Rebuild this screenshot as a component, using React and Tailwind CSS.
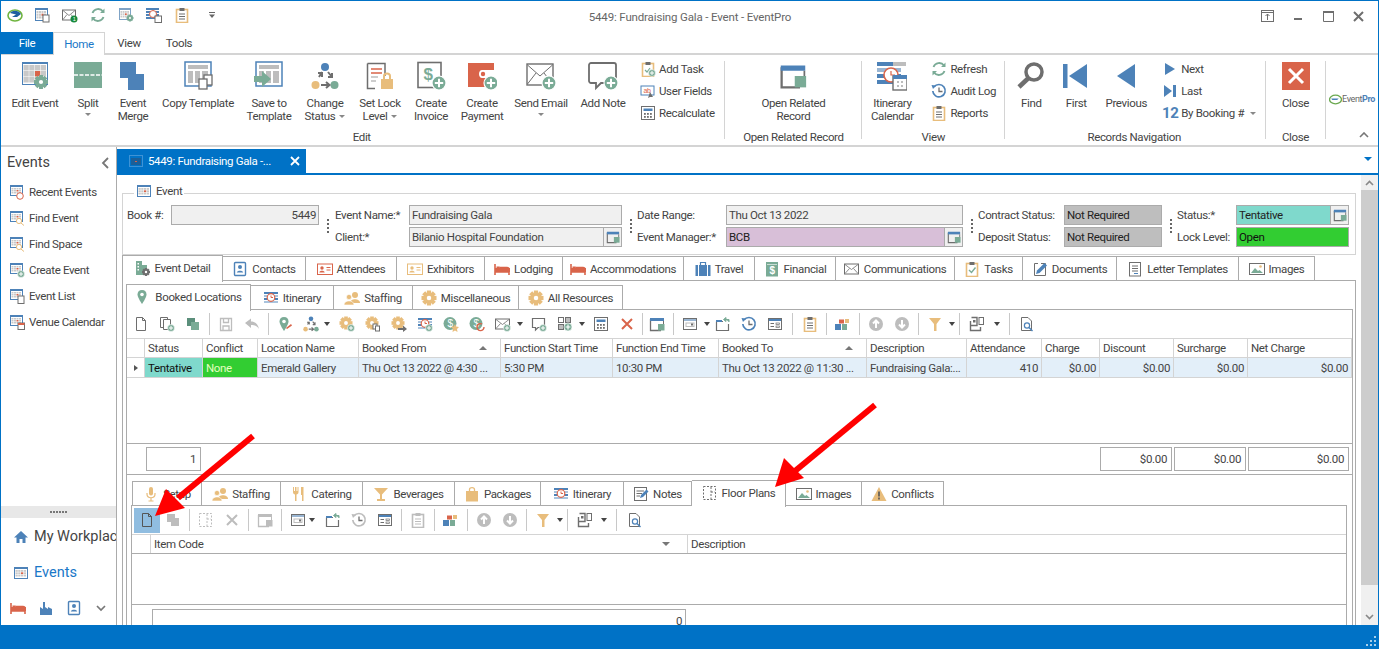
const B = "#4d82b8";
const G = "#7aab96";
const R = "#d9644a";
const T = "#e8bd7c";
const K = "#6e6e6e";
const L = "#bdbdbd";

function Svg({ s = 16, v = 16, children }) {
  return (
    <svg width={s} height={s} viewBox={`0 0 ${v} ${v}`} className="shrink-0">
      {children}
    </svg>
  );
}

function Plus({ x, y, r = 3.5, c = G }) {
  return (
    <g>
      <circle cx={x} cy={y} r={r} fill={c} stroke="#fff" strokeWidth={r / 6} />
      <path d={`M${x - r * 0.6} ${y}H${x + r * 0.6}M${x} ${y - r * 0.6}V${y + r * 0.6}`} stroke="#fff" strokeWidth={r / 3.5} />
    </g>
  );
}

function Gear({ x, y, r, c = T }) {
  return (
    <g>
      {[0, 45, 90, 135].map((a) => (
        <rect key={a} x={x - r * 0.28} y={y - r} width={r * 0.56} height={r * 2} fill={c} transform={`rotate(${a} ${x} ${y})`} />
      ))}
      <circle cx={x} cy={y} r={r * 0.72} fill={c} />
      <circle cx={x} cy={y} r={r * 0.3} fill="#fff" />
    </g>
  );
}

function Cal({ x = 1, y = 2, w = 13, h = 12, c = B }) {
  const cells = [];
  for (let i = 0; i < 3; i++) for (let j = 0; j < 4; j++) cells.push([i, j]);
  const cw = (w - 3) / 4;
  const ch = (h - 5) / 3;
  return (
    <g>
      <rect x={x + 0.5} y={y + 0.5} width={w - 1} height={h - 1} fill="#fff" stroke={c} />
      <rect x={x} y={y} width={w} height={2} fill={c} />
      {cells.map(([i, j]) => (
        <rect key={`${i}${j}`} x={x + 1.5 + j * cw} y={y + 3 + i * ch} width={cw - 0.5} height={ch - 0.5} fill={i === 1 && j === 2 ? R : "#c9c9c9"} />
      ))}
    </g>
  );
}

const DocI = ({ c = K }) => (
  <Svg><path d="M3.5 1.5H9.5L12.5 4.5V14.5H3.5Z M9.5 1.5V4.5H12.5" fill="none" stroke={c} /></Svg>
);
const CopyDocI = () => (
  <Svg><path d="M1.5 1.5H8.5V11.5H1.5Z" fill="#fff" stroke={K} /><path d="M4.5 3.5H11.5V13.5H4.5Z" fill="#fff" stroke={K} /><Plus x={12} y={12} r={3.5} /></Svg>
);
const SquaresI = ({ c = G, d = "#5b8f7b" }) => (
  <Svg><rect x="2" y="2" width="8" height="8" fill={d} /><rect x="6" y="6" width="8" height="8" fill={c} /></Svg>
);
const SaveI = () => (
  <Svg><path d="M2.5 2.5H13.5V14.5H2.5Z M5.5 2.5V6.5H10.5V2.5 M5 14V10H11V14" fill="none" stroke={L} strokeWidth="1.3" /></Svg>
);
const UndoI = () => (
  <Svg><path d="M1 7L7 2.5V5.5C11 5.5 14 8 15 13C13 10 11 9 7 9V12Z" fill={L} /></Svg>
);
const PinI = ({ pencil = true, c = G }) => (
  <Svg>
    <path d="M7 1C4 1 2.5 3 2.5 5.5C2.5 8.5 7 15 7 15C7 15 11.5 8.5 11.5 5.5C11.5 3 10 1 7 1Z" fill={c} />
    <circle cx="7" cy="5.5" r="1.8" fill="#fff" />
    {pencil && <path d="M9 12L14 8L15 9.5L10 13Z" fill={R} />}
  </Svg>
);
const FlowI = ({ s = 16 }) => (
  <Svg s={s} v={28}>
    <circle cx="14" cy="5" r="4" fill={B} />
    <circle cx="4.5" cy="23" r="4" fill={T} />
    <circle cx="23.5" cy="23" r="4" fill={G} />
    <path d="M10 23H18M15 20L18.5 23L15 26M8 15L11 10M7 11H11V15M17 10L21 15M21 11V15H17" fill="none" stroke={K} strokeWidth="2" />
  </Svg>
);
const GearPlusI = () => (<Svg><Gear x={7} y={7} r={6.5} /><Plus x={12} y={12} /></Svg>);
const GearCopyI = () => (<Svg><Gear x={7} y={7} r={6.5} /><rect x="8" y="8" width="4" height="5" fill="#fff" stroke={K} /><rect x="10.5" y="10" width="4" height="5" fill="#fff" stroke={K} /></Svg>);
const GearArrowI = () => (<Svg><Gear x={7} y={7} r={6.5} /><path d="M7 12H12V9.5L16 13L12 16V14H7Z" fill={K} /></Svg>);
const ItinI = ({ plus = false, s = 16 }) => (
  <Svg s={s}>
    {[2, 5, 8, 11].map((y) => (<rect key={y} x="1" y={y} width="14" height="2" fill={y % 2 ? "#a9c3dd" : B} />))}
    <circle cx="8" cy="7.5" r="3.8" fill="#fff" stroke={R} strokeWidth="1.2" />
    <path d="M8 5.5V7.5H10" stroke={R} fill="none" />
    {plus && <Plus x={12} y={12} />}
  </Svg>
);
const DollarI = ({ refresh = false }) => (
  <Svg>
    <circle cx="7" cy="7.5" r="6.5" fill={G} />
    <text x="7" y="11" textAnchor="middle" fontSize="10" fill="#fff" fontFamily="Liberation Sans">$</text>
    {refresh ? <path d="M15 11A3.5 3.5 0 1 1 13 8" fill="none" stroke={R} strokeWidth="1.4" /> : <path d="M12 8L13.2 10.5L16 11L14 13L14.5 16L12 14.5L9.5 16L10 13L8 11L10.8 10.5Z" fill={T} />}
  </Svg>
);
const MailI = ({ plus = true, s = 16 }) => (
  <Svg s={s}>
    <rect x="0.5" y="3" width="14" height="10" fill="#fff" stroke={K} />
    <path d="M1 3.5L7.5 8.5L14 3.5M1 12.5L5.5 7.5M14 12.5L9.5 7.5" fill="none" stroke={K} strokeWidth="0.8" />
    {plus && <Plus x={12} y={12} />}
  </Svg>
);
const NoteI = () => (
  <Svg><path d="M1.5 2.5H13.5V11.5H7L4.5 14V11.5H1.5Z" fill="#fff" stroke={K} strokeWidth="1.2" /><Plus x={12} y={12} /></Svg>
);
const GridPlusI = () => (
  <Svg><rect x="1.5" y="1.5" width="5" height="5" fill="none" stroke={K} /><rect x="8.5" y="1.5" width="5" height="5" fill={L} stroke={K} /><rect x="1.5" y="8.5" width="5" height="5" fill={L} stroke={K} /><Plus x={11} y={11} r={4} /></Svg>
);
const CalcI = ({ s = 16 }) => (
  <Svg s={s}>
    <rect x="1.5" y="1.5" width="13" height="13" fill="#fff" stroke={K} />
    <rect x="3.5" y="3.5" width="9" height="2.5" fill={B} />
    {[4, 7, 10].map((x) => [8, 11].map((y) => (<rect key={`${x}${y}`} x={x} y={y} width="1.8" height="1.8" fill={K} />)))}
  </Svg>
);
const XI = ({ c = R }) => (
  <Svg><path d="M3 3L13 13M13 3L3 13" stroke={c} strokeWidth="2" /></Svg>
);
const WinI = ({ s = 16, gray = false }) => (
  <Svg s={s}>
    <path d="M1.5 3V14.5H12" fill="none" stroke={gray ? L : K} strokeWidth="1.3" />
    <path d="M1 2H15V5H1Z" fill={gray ? L : B} />
    <path d="M14.5 5V8" stroke={gray ? L : K} />
    <rect x="9" y="8" width="6.5" height="6.5" fill={gray ? L : G} />
  </Svg>
);
const Win2I = () => (
  <Svg><rect x="1.5" y="2.5" width="13" height="11" fill="#fff" stroke={K} /><rect x="2" y="3" width="12" height="2" fill="#9ab6d3" /><rect x="4" y="7" width="8" height="3.5" fill="none" stroke={L} /><rect x="9" y="7.5" width="2" height="2" fill={K} /></Svg>
);
const UploadI = () => (
  <Svg><path d="M1.5 5.5H8M13.5 8V14.5H1.5V5.5" fill="none" stroke={K} strokeWidth="1.2" /><path d="M1 4H7V6H1Z" fill={B} /><path d="M14 6V3.5H11M11 1.5L8.5 3.5L11 5.5Z" fill={G} stroke={G} /></Svg>
);
const HistoryI = ({ c = B }) => (
  <Svg><path d="M3 4A6.2 6.2 0 1 1 1.8 8" fill="none" stroke={c} strokeWidth="1.7" /><path d="M0.5 2L5 2.5L2 6Z" fill={c} /><path d="M8 4.5V8.5H11.5" fill="none" stroke={K} strokeWidth="1.3" /></Svg>
);
const FormI = () => (
  <Svg><rect x="1.5" y="2.5" width="13" height="11" fill="#fff" stroke={K} /><rect x="2" y="3" width="12" height="2" fill={B} /><path d="M3.5 7.5H7M3.5 10.5H7" stroke={K} /><rect x="9" y="7" width="3.5" height="1.5" fill="none" stroke={K} strokeWidth="0.7" /><rect x="9" y="10" width="3.5" height="1.5" fill="none" stroke={K} strokeWidth="0.7" /></Svg>
);
const ClipI = ({ c = T, line = K, s = 16 }) => (
  <Svg s={s}>
    <rect x="2.5" y="2.5" width="11" height="13" fill="#fff" stroke={c} strokeWidth="1.6" />
    <rect x="5.5" y="1" width="5" height="3" fill={line} />
    <path d="M5 7H11M5 9.5H11M5 12H11" stroke={line} />
  </Svg>
);
const BlocksI = () => (
  <Svg><rect x="1" y="8" width="6" height="6" fill={B} /><rect x="8" y="8" width="5" height="6" fill={G} /><rect x="5" y="3.5" width="5" height="4" fill={R} /><rect x="11" y="3" width="4" height="4" fill={T} /></Svg>
);
const UpI = () => (
  <Svg><circle cx="8" cy="8" r="7" fill={L} /><path d="M8 12V5M5 7.5L8 4.5L11 7.5" fill="none" stroke="#fff" strokeWidth="2" /></Svg>
);
const DownI = () => (
  <Svg><circle cx="8" cy="8" r="7" fill={L} /><path d="M8 4V11M5 8.5L8 11.5L11 8.5" fill="none" stroke="#fff" strokeWidth="2" /></Svg>
);
const FilterI = () => (
  <Svg><path d="M2 2H14L9.5 8V15H7V8Z" fill={T} /></Svg>
);
const LayoutI = () => (
  <Svg><path d="M1.5 5V14.5H11.5V11M1.5 9.5H8V1.5H2.5" fill="none" stroke={K} strokeWidth="1.4" /><rect x="4" y="4" width="2.5" height="2.5" fill={K} /><rect x="10" y="1.5" width="4.5" height="7" fill="#fff" stroke={K} /></Svg>
);
const PreviewI = () => (
  <Svg><path d="M2.5 1.5H9L12.5 5V14.5H2.5Z" fill="#fff" stroke={K} /><circle cx="8" cy="9.5" r="2.6" fill="#fff" stroke={B} strokeWidth="1.2" /><path d="M10 11.5L13.5 15" stroke={B} strokeWidth="1.4" /></Svg>
);
const FloorI = ({ c = K }) => (
  <Svg><rect x="1.5" y="1.5" width="12" height="13" fill="none" stroke={c} strokeDasharray="2 1.5" /><path d="M9 2V14M9 7H13" stroke={c} strokeDasharray="2 1.5" /></Svg>
);
const BedI = () => (
  <Svg><path d="M1 3V14M1 11H15V14M15 11V8.5C15 7 14 6.5 13 6.5H6V10H2" fill="none" stroke={R} strokeWidth="1.6" /><rect x="1" y="7" width="15" height="4" fill={R} /><rect x="2.5" y="5.5" width="3" height="2" fill={R} /></Svg>
);
const BookI = () => (
  <Svg><rect x="2.5" y="1.5" width="11" height="13" rx="1" fill="#fff" stroke={B} strokeWidth="1.4" /><circle cx="8" cy="6" r="2" fill={B} /><path d="M4.8 11.5C5 9 11 9 11.2 11.5Z" fill={B} /></Svg>
);
const CardI = ({ c = R }) => (
  <Svg><rect x="0.5" y="3" width="15" height="10.5" fill="#fff" stroke={c} /><circle cx="5" cy="7" r="1.7" fill={c} /><path d="M2.3 11.5C2.5 9 7.5 9 7.7 11.5Z" fill={c} /><path d="M9.5 6.5H13.5M9.5 9H13.5" stroke={c} /></Svg>
);
const SuitcaseI = () => (
  <Svg><path d="M5.5 4V1.5H10.5V4" fill="none" stroke={B} strokeWidth="1.2" /><rect x="0.5" y="4" width="2.5" height="11" fill={B} /><rect x="4" y="4" width="8" height="11" fill={B} /><rect x="13" y="4" width="2.5" height="11" fill={B} /></Svg>
);
const FinI = () => (
  <Svg><rect x="2" y="1" width="12" height="14.5" fill={G} /><path d="M3 3.5H13" stroke="#fff" strokeWidth="0.6" /><text x="8" y="13" textAnchor="middle" fontSize="10" fontWeight="700" fill="#fff" fontFamily="Liberation Sans">$</text></Svg>
);
const TaskI = () => (
  <Svg><rect x="2.5" y="2.5" width="11" height="13" fill="#fff" stroke={T} strokeWidth="1.6" /><rect x="5.5" y="1" width="5" height="3" fill={K} /><path d="M5 9L7.5 11.5L11.5 6.5" fill="none" stroke={G} strokeWidth="1.4" /></Svg>
);
const PencilDocI = () => (
  <Svg><path d="M9 2.5H13.5V14.5H2.5V2.5H6" fill="none" stroke={K} /><path d="M4 13L5 9.5L12.5 2L15 4.5L7.5 12Z" fill={B} /></Svg>
);
const LinesI = () => (
  <Svg><rect x="2.5" y="1.5" width="11" height="13.5" fill="#fff" stroke={K} /><path d="M5 5H11M5 7.5H11M5 10H11" stroke={K} /><path d="M7 12.5H11" stroke={B} /></Svg>
);
const PicI = () => (
  <Svg><rect x="0.5" y="2.5" width="15" height="11" fill="#fff" stroke={K} /><path d="M2 12L6 7L9 10L10.5 9L14 12Z" fill={G} /><circle cx="11.5" cy="5.5" r="1.3" fill={T} /></Svg>
);
const PeopleI = () => (
  <Svg><circle cx="11" cy="5" r="3" fill={T} /><path d="M6 13C6 8 16 8 16 13Z" fill={T} /><circle cx="5" cy="7" r="2.6" fill={T} stroke="#fff" strokeWidth="0.6" /><path d="M0 15C0 9.5 10 9.5 10 15Z" fill={T} stroke="#fff" strokeWidth="0.6" /></Svg>
);
const BuildI = () => (
  <Svg><rect x="2" y="1" width="6" height="14" fill={G} /><rect x="8" y="5" width="5" height="10" fill={G} /><rect x="3.5" y="3" width="1.5" height="1.5" fill="#fff" /><rect x="3.5" y="6" width="1.5" height="1.5" fill="#fff" /><rect x="3.5" y="9" width="1.5" height="1.5" fill="#fff" /><Gear x={12} y={12} r={4} c={K} /></Svg>
);
const MicI = () => (
  <Svg><rect x="6" y="1" width="4" height="8.5" rx="2" fill={T} /><path d="M4 7V8C4 13 12 13 12 8V7M8 12V15M5.5 15H10.5" fill="none" stroke={T} strokeWidth="1.2" /></Svg>
);
const ForkI = () => (
  <Svg><path d="M2 1V6C2 8 3 8 4 8.5V15H5.5V8.5C6.5 8 7.5 8 7.5 6V1H6.5V5H5.5V1H4V5H3V1Z M10 1H12.5V15H11V9H10Z" fill={T} /></Svg>
);
const GlassI = () => (
  <Svg><path d="M1 2H15L9 8.5V13H12V15H4V13H7V8.5Z" fill={T} /></Svg>
);
const BagI = () => (
  <Svg><rect x="2" y="5" width="12" height="10.5" fill={T} /><path d="M5.5 7V3.5C5.5 1 10.5 1 10.5 3.5V7" fill="none" stroke={T} strokeWidth="1.3" /></Svg>
);
const NotesI = () => (
  <Svg><rect x="1.5" y="1.5" width="12" height="13" fill="#fff" stroke={K} /><path d="M3.5 5H11M3.5 7.5H9M3.5 10H7" stroke={K} /><path d="M7 12L8 9L13.5 3.5L15.5 5.5L10 11Z" fill={B} /></Svg>
);
const WarnI = () => (
  <Svg><path d="M8 1L15.5 15H0.5Z" fill={T} /><path d="M8 5.5V10.5M8 11.5V13.5" stroke="#555" strokeWidth="1.6" /></Svg>
);

// ribbon, big icons
const BigEdit = () => (<Svg s={30} v={30}><Cal x={2} y={1} w={26} h={23} /><Gear x={21} y={21} r={7} c={G} /></Svg>);
const BigSplit = () => (
  <Svg s={28} v={28}><rect width="28" height="26" fill={G} /><path d="M0 13H28" stroke="#fff" strokeWidth="1.5" strokeDasharray="4 1.5" /></Svg>
);
const BigMerge = () => (
  <Svg s={28} v={28}><rect x="1" y="0" width="16" height="16" fill={B} /><rect x="9" y="12" width="16" height="16" fill={B} /></Svg>
);
const TplFrame = () => (
  <g>
    <rect x="2" y="1" width="26" height="24" fill="#fff" stroke={B} strokeWidth="1.5" />
    <rect x="5" y="4" width="20" height="4" fill={L} />
    <rect x="5" y="10" width="5" height="12" fill={L} />
    <rect x="12" y="10" width="5" height="12" fill={L} />
    <rect x="19" y="10" width="6" height="12" fill={L} />
  </g>
);
const BigCopyTpl = () => (
  <Svg s={30} v={30}><TplFrame /><rect x="21" y="14" width="8" height="10" fill="#fff" stroke={K} strokeWidth="1.3" /><rect x="16" y="18" width="8" height="10" fill="#fff" stroke={K} strokeWidth="1.3" /></Svg>
);
const BigSaveTpl = () => (
  <Svg s={30} v={30}><TplFrame /><path d="M0 15H8V10L17 18L8 26V21H0Z" fill={G} /></Svg>
);
const BigLock = () => (
  <Svg s={28} v={28}>
    <path d="M1.5 1.5H19V14M9 26.5H1.5V1.5" fill="#fff" stroke={K} strokeWidth="1.5" />
    <path d="M5 7H16M5 11H16" stroke={R} strokeWidth="1.4" /><path d="M5 15H12M5 19H10" stroke={L} strokeWidth="1.4" />
    <rect x="15" y="17" width="12" height="10" fill={T} /><path d="M18 17V14C18 10.5 24 10.5 24 14V17" fill="none" stroke={T} strokeWidth="2" />
  </Svg>
);
const BigInvoice = () => (
  <Svg s={30} v={30}>
    <rect x="2" y="1.5" width="23" height="25" fill="#fff" stroke={K} strokeWidth="1.6" />
    <text x="12" y="19" textAnchor="middle" fontSize="17" fontWeight="700" fill={G} fontFamily="Liberation Sans">$</text>
    <Plus x={23} y={22} r={7} />
  </Svg>
);
const BigPayment = () => (
  <Svg s={30} v={30}>
    <rect x="1" y="2" width="26" height="24" fill={R} />
    <path d="M27 9H15C11 9 11 17 15 17H27Z" fill="#fff" /><circle cx="16" cy="13" r="2.2" fill={R} />
    <Plus x={24} y={22} r={7} />
  </Svg>
);
const BigMail = () => (
  <Svg s={30} v={30}>
    <rect x="1" y="3" width="26" height="21" fill="#fff" stroke={K} strokeWidth="1.4" />
    <path d="M1.5 4L14 15L26.5 4M1.5 23L10 12M26.5 23L18 12" fill="none" stroke={K} />
    <Plus x={23} y={22} r={7} />
  </Svg>
);
const BigNote = () => (
  <Svg s={30} v={30}><path d="M3 2H26C27 2 28 3 28 4V20C28 21 27 22 26 22H13L8 27V22H3C2 22 1 21 1 20V4C1 3 2 2 3 2Z" fill="#fff" stroke={K} strokeWidth="1.8" /><Plus x={23} y={22} r={7} /></Svg>
);
const BigItin = () => (
  <Svg s={30} v={30}>
    {[1, 7, 13, 19].map((y) => (<rect key={y} x="0" y={y} width="24" height="4" fill={B} />))}
    <rect x="16" y="1" width="13" height="4" fill={L} />
    <rect x="0" y="7" width="24" height="4" fill="#9ab6d3" />
    <circle cx="14" cy="14" r="7" fill="#fff" stroke={R} strokeWidth="1.6" />
    <path d="M14 10V14H18" fill="none" stroke={R} strokeWidth="1.2" />
    <rect x="16" y="15" width="14" height="14" fill="#fff" stroke={K} strokeWidth="1.4" />
    <rect x="16" y="14" width="14" height="4" fill={B} />
    <path d="M20 21H22M24 21H26M20 25H22M24 25H26" stroke={L} strokeWidth="2" />
  </Svg>
);
const BigFind = () => (
  <Svg s={30} v={30}><circle cx="18" cy="11" r="8" fill="none" stroke={K} strokeWidth="3.5" /><path d="M12.5 17L3 26" stroke={K} strokeWidth="4.5" /></Svg>
);
const BigFirst = () => (
  <Svg s={26} v={26}><rect x="0" y="1" width="4.5" height="24" fill={B} /><path d="M6 13L24 1V25Z" fill={B} /></Svg>
);
const BigPrev = () => (
  <Svg s={24} v={24}><path d="M3 12L21 0V24Z" fill={B} /></Svg>
);
const BigClose = () => (
  <Svg s={28} v={28}><rect width="28" height="28" fill={R} /><path d="M7 7L21 21M21 7L7 21" stroke="#fff" strokeWidth="3" /></Svg>
);

const Caret = () => <span className="inline-block w-0 h-0 border-x-[3px] border-x-transparent border-t-[3px] border-t-[#888] align-middle" />;
const Dd = ({ w }) => (
  <span className={`flex justify-center ${w}`}>
    <span className="w-0 h-0 border-x-[3.5px] border-x-transparent border-t-[4px] border-t-[#444]" />
  </span>
);

function BigBtn({ w, icon, lines, caret, caretInline }) {
  return (
    <div className={`flex flex-col items-center ${w}`}>
      <div className="h-[30px] flex items-center justify-center">{icon}</div>
      <div className="mt-[6px] text-center leading-[13px]">
        {lines.map((l, i) => (
          <div key={l} className="whitespace-nowrap">
            {l}
            {caretInline && i === lines.length - 1 && <span className="ml-[4px]"><Caret /></span>}
          </div>
        ))}
        {caret && <div className="leading-[13px] -mt-[2px]"><Caret /></div>}
      </div>
    </div>
  );
}

function SmallBtn({ icon, label, caret }) {
  return (
    <div className="flex items-center h-[22px]">
      <span className="w-[20px] flex justify-center">{icon}</span>
      <span className="ml-[1px] whitespace-nowrap">{label}</span>
      {caret && <span className="ml-[6px]"><Caret /></span>}
    </div>
  );
}

function Group({ w, label, children }) {
  return (
    <div className={`flex flex-col border-r border-[#d4d4d4] my-[6px] ${w}`}>
      <div className="flex flex-1">{children}</div>
      <div className="text-center leading-[13px] h-[8px] whitespace-nowrap">{label}</div>
    </div>
  );
}

function Ribbon() {
  return (
    <div className="h-[92px] flex border-b-2 border-[#d4d4d4] shrink-0 pl-[6px] overflow-hidden">
      <Group w="w-[719px]" label={<span className="-ml-[8px]">Edit</span>}>
        <BigBtn w="w-[56px]" icon={<BigEdit />} lines={["Edit Event"]} />
        <BigBtn w="w-[50px]" icon={<BigSplit />} lines={["Split"]} caret />
        <BigBtn w="w-[40px]" icon={<BigMerge />} lines={["Event", "Merge"]} />
        <BigBtn w="w-[90px]" icon={<BigCopyTpl />} lines={["Copy Template"]} />
        <BigBtn w="w-[52px]" icon={<BigSaveTpl />} lines={["Save to", "Template"]} />
        <BigBtn w="w-[60px]" icon={<FlowI s={28} />} lines={["Change", "Status"]} caretInline />
        <BigBtn w="w-[50px]" icon={<BigLock />} lines={["Set Lock", "Level"]} caretInline />
        <BigBtn w="w-[52px]" icon={<BigInvoice />} lines={["Create", "Invoice"]} />
        <BigBtn w="w-[50px]" icon={<BigPayment />} lines={["Create", "Payment"]} />
        <BigBtn w="w-[68px]" icon={<BigMail />} lines={["Send Email"]} caret />
        <BigBtn w="w-[56px]" icon={<BigNote />} lines={["Add Note"]} />
        <div className="ml-[7px] -mt-[3px]">
          <SmallBtn icon={<Svg><rect x="2.5" y="2.5" width="11" height="13" fill="#fff" stroke={T} strokeWidth="1.6" /><rect x="5.5" y="1" width="5" height="3" fill={K} /><path d="M5 9L7 11L10 7" fill="none" stroke={G} strokeWidth="1.2" /><Plus x={12} y={12} /></Svg>} label="Add Task" />
          <SmallBtn icon={<Svg><rect x="1" y="3" width="13" height="9" fill="#fff" stroke={B} /><text x="7" y="10" textAnchor="middle" fontSize="7" fill={R} fontFamily="Liberation Sans">ab</text><path d="M10 9L13 14H10L8 15Z" fill={K} /></Svg>} label="User Fields" />
          <SmallBtn icon={<CalcI />} label="Recalculate" />
        </div>
      </Group>
      <Group w="w-[137px]" label="Open Related Record">
        <div className="w-full">
          <BigBtn w="w-full" icon={<WinI s={28} />} lines={["Open Related", "Record"]} />
        </div>
      </Group>
      <Group w="w-[143px]" label="View">
        <BigBtn w="w-[60px]" icon={<BigItin />} lines={["Itinerary", "Calendar"]} />
        <div className="ml-[7px] -mt-[3px]">
          <SmallBtn icon={<Svg><path d="M2.5 6A6 6 0 0 1 13 4.5M13.5 10A6 6 0 0 1 3 11.5" fill="none" stroke={G} strokeWidth="1.8" /><path d="M14.5 1.5V6H10ZM1.5 14.5V10H6Z" fill={G} /></Svg>} label="Refresh" />
          <SmallBtn icon={<HistoryI />} label="Audit Log" />
          <SmallBtn icon={<ClipI />} label="Reports" />
        </div>
      </Group>
      <Group w="w-[261px]" label={<span className="-ml-[2px]">Records Navigation</span>}>
        <BigBtn w="w-[52px]" icon={<BigFind />} lines={["Find"]} />
        <BigBtn w="w-[38px]" icon={<BigFirst />} lines={["First"]} />
        <BigBtn w="w-[62px]" icon={<BigPrev />} lines={["Previous"]} />
        <div className="ml-[3px] -mt-[3px]">
          <SmallBtn icon={<Svg s={12} v={12}><path d="M1 0L11 6L1 12Z" fill={B} /></Svg>} label="Next" />
          <SmallBtn icon={<Svg s={12} v={12}><path d="M0 0L8 6L0 12Z M9 0H12V12H9Z" fill={B} /></Svg>} label="Last" />
          <SmallBtn icon={<span className="text-[15px] font-bold text-[#4d82b8] leading-none">12</span>} label="By Booking #" caret />
        </div>
      </Group>
      <Group w="w-[60px]" label="Close">
        <BigBtn w="w-full" icon={<BigClose />} lines={["Close"]} />
      </Group>
      <div className="relative w-[52px] flex items-start pl-[3px] pt-[38px]">
        <Svg s={13} v={12}><ellipse cx="6" cy="6" rx="5.5" ry="4" fill="none" stroke="#6aa84f" strokeWidth="1.2" /><path d="M2 5H9L7.5 6.5H3Z" fill={B} /></Svg>
        <span className="text-[9px] leading-[13px] text-[#666] tracking-[-0.4px]">Event<b className="text-[#4d82b8]">Pro</b></span>
        <span className="absolute left-[33px] top-[77px]">
          <svg width="10" height="6" viewBox="0 0 10 6"><path d="M1 5L5 1L9 5" fill="none" stroke="#777" strokeWidth="1.6" /></svg>
        </span>
      </div>
    </div>
  );
}

function TitleBar() {
  return (
    <div className="h-[31px] flex items-center shrink-0">
      <div className="w-[587px] flex items-center -mt-[3px]">
        <span className="w-[27px] flex justify-center">
          <Svg><ellipse cx="8" cy="8.5" rx="7" ry="5.5" fill="none" stroke="#6fb43f" strokeWidth="1.6" /><path d="M3 6C6 3 11 3 14 7L10 10H5L9 7.5Z" fill="#1f5fa0" /></Svg>
        </span>
        <span className="w-[28px] flex justify-center"><Svg><Cal x={1} y={1} w={13} h={13} /><rect x="9" y="8" width="6" height="7" fill="#fff" stroke={K} /></Svg></span>
        <span className="w-[28px] flex justify-center"><Svg><MailIcon /><circle cx="12" cy="12" r="3.5" fill="#178a3c" /><text x="12" y="14" textAnchor="middle" fontSize="5.5" fill="#fff" fontFamily="Liberation Sans">1</text></Svg></span>
        <span className="w-[28px] flex justify-center"><Svg><path d="M2.5 6A6 6 0 0 1 13 4.5M13.5 10A6 6 0 0 1 3 11.5" fill="none" stroke={G} strokeWidth="1.9" /><path d="M14.5 1.5V6H10ZM1.5 14.5V10H6Z" fill={G} /></Svg></span>
        <span className="w-[28px] flex justify-center"><Svg><Cal x={1} y={1} w={12} h={12} c="#7fa3c6" /><Gear x={12} y={11} r={3.5} c={G} /></Svg></span>
        <span className="w-[28px] flex justify-center"><ItinCal /></span>
        <span className="w-[28px] flex justify-center"><ClipI /></span>
        <span className="w-[32px] flex justify-center">
          <svg width="6" height="6" viewBox="0 0 6 6"><path d="M0 0H6V1H0Z M0 2.5H6L3 6Z" fill="#666" /></svg>
        </span>
      </div>
      <div className="w-[204px] text-center text-[#666] whitespace-nowrap tracking-[-0.15px]">5449: Fundraising Gala - Event - EventPro</div>
      <div className="ml-auto flex items-center pr-[5px] -mt-[1px]">
        <span className="w-[30px] flex justify-center">
          <Svg s={14} v={14}><rect x="0.5" y="1.5" width="12" height="11" fill="none" stroke={K} /><path d="M1 3.5H12M6.5 11V5M4.5 7L6.5 5L8.5 7" fill="none" stroke={K} /></Svg>
        </span>
        <span className="w-[30px] flex justify-center"><svg width="10" height="10" viewBox="0 0 10 10"><rect x="1" y="7" width="8" height="2" fill={K} /></svg></span>
        <span className="w-[30px] flex justify-center"><svg width="11" height="11" viewBox="0 0 11 11"><path d="M0.5 1H10.5V10.5H0.5Z" fill="none" stroke={K} /><rect x="0" y="0" width="11" height="2" fill={K} /></svg></span>
        <span className="w-[30px] flex justify-center"><svg width="11" height="11" viewBox="0 0 11 11"><path d="M1 1L10 10M10 1L1 10" stroke={K} strokeWidth="2" /></svg></span>
      </div>
    </div>
  );
}

const MailIcon = () => (
  <g>
    <rect x="0.5" y="3" width="13" height="10" fill="#fff" stroke={K} />
    <path d="M1 3.5L7 8.5L13 3.5M1 12.5L5 7.5M13 12.5L9 7.5" fill="none" stroke={K} strokeWidth="0.8" />
  </g>
);

const ItinCal = () => (
  <Svg>
    {[1, 4, 7, 10].map((y) => (<rect key={y} x="0" y={y} width="13" height="2" fill={B} />))}
    <circle cx="7" cy="7" r="3.5" fill="#fff" stroke={R} />
    <rect x="9" y="9" width="6.5" height="6.5" fill="#fff" stroke={K} />
  </Svg>
);

function MenuTabs() {
  return (
    <div className="h-[23px] flex border-b-2 border-[#d4d4d4] shrink-0">
      <div className="w-[52px] h-[22px] bg-[#0072c6] text-white flex items-center justify-center">File</div>
      <div className="w-[52px] h-[23px] bg-white border border-b-0 border-[#d4d4d4] text-[#1a78c8] flex items-center justify-center">Home</div>
      <div className="w-[48px] flex items-center justify-center">View</div>
      <div className="w-[52px] flex items-center justify-center">Tools</div>
    </div>
  );
}

function Sidebar() {
  const items = [
    ["Recent Events", <Svg key="a"><Cal x={1} y={1} w={13} h={11} /><circle cx="11" cy="12" r="3.3" fill="#fff" stroke={R} /></Svg>],
    ["Find Event", <Svg key="b"><Cal x={1} y={1} w={13} h={11} /><circle cx="10" cy="11" r="2.6" fill="#fff" stroke={T} /><path d="M12 13L15 15.5" stroke={T} /></Svg>],
    ["Find Space", <Svg key="c"><Cal x={1} y={1} w={13} h={11} /><circle cx="10" cy="11" r="2.6" fill="#fff" stroke={T} /><path d="M12 13L15 15.5" stroke={T} /></Svg>],
    ["Create Event", <Svg key="d"><Cal x={1} y={1} w={13} h={11} /><Plus x={12} y={12} /></Svg>],
    ["Event List", <Svg key="e"><Cal x={1} y={1} w={13} h={11} /><rect x="9" y="8" width="6" height="7.5" fill="#fff" stroke={K} /></Svg>],
    ["Venue Calendar", <Svg key="f"><Cal x={1} y={1} w={13} h={11} /><rect x="9" y="9" width="6.5" height="6.5" fill="#fff" stroke={K} /><rect x="9" y="9" width="6.5" height="2" fill={R} /></Svg>],
  ];
  return (
    <div className="w-[116px] shrink-0 border-r border-[#ababab] flex flex-col h-full">
      <div className="h-[30px] flex items-center justify-between pl-[6px] pr-[7px] text-[14.5px] tracking-normal pt-[1px]">
        <span>Events</span>
        <svg width="8" height="12" viewBox="0 0 8 12"><path d="M7 1L2 6L7 11" fill="none" stroke="#777" strokeWidth="1.8" /></svg>
      </div>
      <div className="pt-[2px]">
        {items.map(([label, icon]) => (
          <div key={label} className="h-[26px] flex items-center pl-[8px] gap-[4px] whitespace-nowrap">
            {icon}
            <span>{label}</span>
          </div>
        ))}
      </div>
      <div className="mt-auto h-[12px] bg-[#e8e8e8] flex items-center justify-center gap-[1px] shrink-0">
        {[0, 1, 2, 3, 4, 5].map((i) => (<span key={i} className="w-[2px] h-[2px] bg-[#777]" />))}
      </div>
      <div className="h-[36px] flex items-center pl-[12px] pt-[1px] gap-[5px] text-[14.5px] tracking-normal overflow-hidden whitespace-nowrap shrink-0">
        <Svg s={16} v={16}><path d="M8 2L1 8.5H3.5V14H6.5V10H9.5V14H12.5V8.5H15Z" fill={B} /></Svg>
        <span>My Workplace</span>
      </div>
      <div className="h-[36px] flex items-center pl-[12px] pt-[1px] gap-[5px] text-[14.5px] tracking-normal text-[#1a78c8] shrink-0">
        <Svg s={16} v={16}><Cal x={1} y={2} w={14} h={12} /></Svg>
        <span>Events</span>
      </div>
      <div className="h-[35px] flex items-center pl-[9px] pt-[1px] shrink-0">
        <span className="w-[28px]"><BedI /></span>
        <span className="w-[28px]">
          <Svg><path d="M2 15V7L5 9V2H7V7L10 9V7L14 9V15Z" fill={B} /></Svg>
        </span>
        <span className="w-[30px]"><BookI /></span>
        <span className="w-[20px]">
          <svg width="10" height="7" viewBox="0 0 10 7"><path d="M1 1L5 5L9 1" fill="none" stroke="#777" strokeWidth="1.7" /></svg>
        </span>
      </div>
    </div>
  );
}

function Tab({ w, icon, label, active }) {
  return (
    <div
      className={`${w} flex items-center justify-center gap-[4px] whitespace-nowrap border border-l-0 border-[#ababab] first:border-l ${
        active ? "h-[27px] border-b-0 bg-white relative z-10 -mb-px pb-[3px]" : "h-[25px] border-b-0"
      }`}
    >
      {icon}
      <span>{label}</span>
    </div>
  );
}

function Field({ children, className = "", picker, right }) {
  return (
    <div className={`h-[20px] border border-[#ababab] flex items-center ${className}`}>
      <span className={`flex-1 px-[2px] ${right ? "text-right" : ""} whitespace-nowrap`}>{children}</span>
      {picker && (
        <span className="w-[18px] h-full bg-[#f0f0f0] border-l border-[#ababab] flex items-center justify-center"><WinI s={14} /></span>
      )}
    </div>
  );
}

const Dots = () => (
  <div className="row-span-2 flex flex-col items-center justify-center gap-[2px] w-[8px] ml-[5px]">
    {[0, 1, 2, 3].map((i) => (<span key={i} className="w-[2px] h-[2px] bg-[#666]" />))}
  </div>
);

function EventBox() {
  return (
    <div className="ml-[5px] mt-[18px] w-[1234px] h-[62px] border border-[#d4d4d4] shrink-0">
      <div className="-mt-[12px] ml-[11px] w-fit bg-white px-[2px] flex items-center gap-[4px] h-[18px]">
        <Svg><Cal x={1} y={2} w={14} h={12} /></Svg>
        <span>Event</span>
      </div>
      <div className="mt-[5px] ml-[4px] grid grid-rows-[20px_20px] gap-y-[2px] grid-cols-[44px_148px_16px_74px_213px_15px_89px_237px_15px_86px_98px_15px_59px_113px] items-center whitespace-nowrap">
        <div>Book #:</div>
        <Field className="bg-[#f0f0f0]" right>5449</Field>
        <Dots />
        <div>Event Name:*</div>
        <Field className="bg-[#f0f0f0]">Fundraising Gala</Field>
        <Dots />
        <div>Date Range:</div>
        <Field className="bg-[#f0f0f0]">Thu Oct 13 2022</Field>
        <Dots />
        <div>Contract Status:</div>
        <Field className="bg-[#bebebe] text-[#222]">Not Required</Field>
        <Dots />
        <div>Status:*</div>
        <Field className="bg-[#7fd9cc] text-[#222]" picker>Tentative</Field>

        <div className="col-start-4">Client:*</div>
        <Field className="bg-[#f0f0f0]" picker>Bilanio Hospital Foundation</Field>
        <div className="col-start-7">Event Manager:*</div>
        <Field className="bg-[#d8bfd8] text-[#222]" picker>BCB</Field>
        <div className="col-start-10">Deposit Status:</div>
        <Field className="bg-[#bebebe] text-[#222]">Not Required</Field>
        <div className="col-start-13">Lock Level:</div>
        <Field className="bg-[#32cd32] text-[#111]">Open</Field>
      </div>
    </div>
  );
}

function Sep({ w = "w-[7px]" }) {
  return (
    <span className={`${w} flex justify-center`}>
      <span className="w-px h-[22px] bg-[#c8c8c8]" />
    </span>
  );
}

const Ti = ({ children, active }) => (
  <span className={`w-[26px] h-[25px] flex items-center justify-center ${active ? "bg-[#90bde0]" : ""}`}>{children}</span>
);

const CELL = "h-full flex items-center px-[3px] border-r whitespace-nowrap overflow-hidden";

function TopGrid() {
  const cols = [
    ["w-[58px]", "Status"],
    ["w-[55px]", "Conflict"],
    ["w-[101px]", "Location Name"],
    ["w-[142px]", "Booked From", true],
    ["w-[112px]", "Function Start Time"],
    ["w-[106px]", "Function End Time"],
    ["w-[148px]", "Booked To", true],
    ["w-[100px]", "Description"],
    ["w-[75px]", "Attendance"],
    ["w-[58px]", "Charge"],
    ["w-[74px]", "Discount"],
    ["w-[74px]", "Surcharge"],
    ["flex-1", "Net Charge"],
  ];
  const row = [
    ["w-[58px] bg-[#7fd9cc] text-[#111]", "Tentative"],
    ["w-[55px] bg-[#32cd32] text-[#e4ffc0]", "None"],
    ["w-[101px]", "Emerald Gallery"],
    ["w-[142px]", "Thu Oct 13 2022 @ 4:30 ..."],
    ["w-[112px]", "5:30 PM"],
    ["w-[106px]", "10:30 PM"],
    ["w-[148px]", "Thu Oct 13 2022 @ 11:30 ..."],
    ["w-[100px]", "Fundraising Gala:..."],
    ["w-[75px] justify-end", "410"],
    ["w-[58px] justify-end", "$0.00"],
    ["w-[74px] justify-end", "$0.00"],
    ["w-[74px] justify-end", "$0.00"],
    ["flex-1 justify-end", "$0.00"],
  ];
  return (
    <div className="h-[106px] border-b border-[#ababab] shrink-0">
      <div className="h-[20px] flex border-y border-[#d4d4d4]">
        <span className="w-[18px] border-r border-[#d4d4d4]" />
        {cols.map(([w, label, sort]) => (
          <span key={label} className={`${CELL} ${w} border-[#d4d4d4] justify-between`}>
            {label}
            {sort && <span className="mr-[10px] w-0 h-0 border-x-[4px] border-x-transparent border-b-[4px] border-b-[#777]" />}
          </span>
        ))}
      </div>
      <div className="h-[20px] flex border-b border-[#d4d4d4]">
        <span className="w-[18px] border-r border-[#d4d4d4] flex items-center justify-center">
          <span className="w-0 h-0 border-y-[3.5px] border-y-transparent border-l-[4px] border-l-[#555]" />
        </span>
        <div className="flex flex-1 bg-[#e3eff9]">
          {row.map(([w, label]) => (
            <span key={w + label} className={`${CELL} ${w} border-[#d4d4d4]`}>{label}</span>
          ))}
        </div>
      </div>
    </div>
  );
}

function TopTotals() {
  const Box = ({ w, children }) => (
    <div className={`${w} h-[24px] border border-[#ababab] flex items-center justify-end px-[4px]`}>{children}</div>
  );
  return (
    <div className="h-[31px] border-b border-[#ababab] shrink-0 flex items-center pl-[19px] pr-[3px]">
      <Box w="w-[55px]">1</Box>
      <div className="ml-auto flex gap-[2px]">
        <Box w="w-[72px]">$0.00</Box>
        <Box w="w-[72px]">$0.00</Box>
        <Box w="w-[101px]">$0.00</Box>
      </div>
    </div>
  );
}

function BottomPanel() {
  return (
    <div className="flex-1 pl-[4px] pr-[5px] pt-[5px] min-h-0">
      <div className="flex items-end h-[26px] pl-px relative z-10 -mb-px">
        <Tab w="w-[70px]" icon={<MicI />} label="Setup" />
        <Tab w="w-[79px]" icon={<PeopleI />} label="Staffing" />
        <Tab w="w-[82px]" icon={<ForkI />} label="Catering" />
        <Tab w="w-[92px]" icon={<GlassI />} label="Beverages" />
        <Tab w="w-[86px]" icon={<BagI />} label="Packages" />
        <Tab w="w-[83px]" icon={<ItinI />} label="Itinerary" />
        <Tab w="w-[68px]" icon={<NotesI />} label="Notes" />
        <Tab w="w-[94px]" icon={<FloorI />} label="Floor Plans" active />
        <Tab w="w-[76px]" icon={<PicI />} label="Images" />
        <Tab w="w-[82px]" icon={<WarnI />} label="Conflicts" />
      </div>
      <div className="border border-[#ababab] h-[130px] overflow-hidden">
        <div className="h-[29px] flex items-center pl-[2px] border-b border-[#d4d4d4]">
          <Ti active><DocI c="#555" /></Ti>
          <Ti><SquaresI c={L} d={L} /></Ti>
          <Sep />
          <Ti><FloorI c={L} /></Ti>
          <Ti><XI c={L} /></Ti>
          <Sep />
          <Ti><WinI gray /></Ti>
          <Sep />
          <Ti><Win2I /></Ti>
          <Dd w="w-[9px] -ml-[4px] mr-[4px]" />
          <Ti><UploadI /></Ti>
          <Ti><HistoryI c={L} /></Ti>
          <Ti><FormI /></Ti>
          <Sep />
          <Ti><ClipI c={L} line={L} /></Ti>
          <Sep w="w-[6px]" />
          <Ti><BlocksI /></Ti>
          <Sep w="w-[8px]" />
          <Ti><UpI /></Ti>
          <Ti><DownI /></Ti>
          <Sep />
          <Ti><FilterI /></Ti>
          <Dd w="w-[7px]" />
          <Sep w="w-[9px]" />
          <Ti><LayoutI /></Ti>
          <Dd w="w-[12px]" />
          <Sep w="w-[12px]" />
          <Ti><PreviewI /></Ti>
        </div>
        <div className="h-[19px] flex border-b border-[#ababab]">
          <span className="w-[19px] border-r border-[#d4d4d4]" />
          <span className={`${CELL} w-[537px] border-[#d4d4d4] justify-between`}>
            Item Code
            <span className="mr-[14px] w-0 h-0 border-x-[4px] border-x-transparent border-t-[4px] border-t-[#777]" />
          </span>
          <span className="px-[3px] flex items-center">Description</span>
        </div>
        <div className="h-[51px] border-b border-[#ababab]" />
        <div className="ml-[20px] mt-[4px] w-[534px] h-[24px] border border-[#ababab] flex items-center justify-end px-[3px]">0</div>
      </div>
    </div>
  );
}

function Arrows() {
  return (
    <svg className="absolute inset-0 pointer-events-none z-20" width="1379" height="649" viewBox="0 0 1379 649">
      <path d="M253 435L178 497" stroke="#ff0000" strokeWidth="6" />
      <path d="M155 515L185 507L166 488Z" fill="#ff0000" />
      <path d="M875 404L795 470" stroke="#ff0000" strokeWidth="6" />
      <path d="M775 486L804 477L784 457Z" fill="#ff0000" />
    </svg>
  );
}

export default function App() {
  return (
    <div className="relative w-[1379px] h-[649px] overflow-hidden bg-white flex flex-col text-[11.5px] tracking-[-0.35px] leading-[14px] text-[#444] [font-family:Roboto,sans-serif] border-t border-[#0072c6]">
      <Arrows />
      <div className="flex-1 flex flex-col min-h-0 border-x border-[#0072c6]">
        <TitleBar />
        <MenuTabs />
        <Ribbon />
        <div className="flex flex-1 min-h-0">
          <Sidebar />
          <div className="flex-1 min-w-0 flex flex-col">
            <div className="h-[28px] border-b-2 border-[#0072c6] flex items-end shrink-0">
              <div className="w-[189px] h-[24px] bg-[#0072c6] text-white flex items-center pl-[11px] gap-[4px]">
                <Svg><rect x="1.5" y="2.5" width="13" height="11" fill="none" stroke="#3e93d6" /><rect x="3" y="5" width="10" height="7" fill="#1a5f99" /><rect x="7" y="8" width="2" height="1" fill={R} /></Svg>
                <span className="whitespace-nowrap">5449: Fundraising Gala -...</span>
                <svg className="ml-[15px] shrink-0" width="10" height="10" viewBox="0 0 10 10"><path d="M1 1L9 9M9 1L1 9" stroke="#fff" strokeWidth="1.8" /></svg>
              </div>
              <div className="ml-auto mr-[6px] mb-[12px] w-0 h-0 border-x-[4px] border-x-transparent border-t-[4px] border-t-[#0072c6]" />
            </div>
            <div className="flex flex-1 min-h-0">
              <div className="flex-1 min-w-0 flex flex-col">
                <EventBox />
                <div className="ml-[5px] flex items-end h-[26px] relative z-10 -mb-px shrink-0">
                  <Tab w="w-[101px]" icon={<BuildI />} label="Event Detail" active />
                  <Tab w="w-[83px]" icon={<BookI />} label="Contacts" />
                  <Tab w="w-[91px]" icon={<CardI />} label="Attendees" />
                  <Tab w="w-[88px]" icon={<CardI c={T} />} label="Exhibitors" />
                  <Tab w="w-[78px]" icon={<BedI />} label="Lodging" />
                  <Tab w="w-[121px]" icon={<BedI />} label="Accommodations" />
                  <Tab w="w-[71px]" icon={<SuitcaseI />} label="Travel" />
                  <Tab w="w-[81px]" icon={<FinI />} label="Financial" />
                  <Tab w="w-[119px]" icon={<MailI plus={false} />} label="Communications" />
                  <Tab w="w-[68px]" icon={<TaskI />} label="Tasks" />
                  <Tab w="w-[94px]" icon={<PencilDocI />} label="Documents" />
                  <Tab w="w-[122px]" icon={<LinesI />} label="Letter Templates" />
                  <Tab w="w-[76px]" icon={<PicI />} label="Images" />
                </div>
                <div className="ml-[5px] w-[1234px] flex-1 min-h-0 border-x border-t border-[#ababab] pl-[3px] pr-[2px] pt-[2px] flex flex-col">
                  <div className="flex items-end h-[27px] relative z-10 -mb-px shrink-0">
                    <Tab w="w-[125px]" icon={<PinI pencil={false} />} label="Booked Locations" active />
                    <Tab w="w-[83px]" icon={<ItinI />} label="Itinerary" />
                    <Tab w="w-[79px]" icon={<PeopleI />} label="Staffing" />
                    <Tab w="w-[106px]" icon={<Gear8 />} label="Miscellaneous" />
                    <Tab w="w-[104px]" icon={<Gear8 />} label="All Resources" />
                  </div>
                  <div className="flex-1 min-h-0 border-x border-t border-[#ababab] flex flex-col">
                    <div className="h-[28px] flex items-center pl-[1px] shrink-0">
                      <Ti><DocI /></Ti>
                      <Ti><CopyDocI /></Ti>
                      <Ti><SquaresI /></Ti>
                      <Sep />
                      <Ti><SaveI /></Ti>
                      <Ti><UndoI /></Ti>
                      <Sep />
                      <Ti><PinI /></Ti>
                      <Ti><FlowI /></Ti>
                      <Dd w="w-[10px] -ml-[2px] mr-[2px]" />
                      <Ti><GearPlusI /></Ti>
                      <Ti><GearCopyI /></Ti>
                      <Ti><GearArrowI /></Ti>
                      <Ti><ItinI plus /></Ti>
                      <Ti><DollarI /></Ti>
                      <Ti><DollarI refresh /></Ti>
                      <Ti><MailI /></Ti>
                      <Dd w="w-[10px] -ml-[1px] mr-[1px]" />
                      <Ti><NoteI /></Ti>
                      <Ti><GridPlusI /></Ti>
                      <Dd w="w-[10px] -ml-[1px] mr-[1px]" />
                      <Ti><CalcI /></Ti>
                      <Ti><XI /></Ti>
                      <Sep w="w-[4px]" />
                      <Ti><WinI /></Ti>
                      <Sep />
                      <Ti><Win2I /></Ti>
                      <Dd w="w-[7px]" />
                      <Ti><UploadI /></Ti>
                      <Ti><HistoryI /></Ti>
                      <Ti><FormI /></Ti>
                      <Sep w="w-[9px]" />
                      <Ti><ClipI /></Ti>
                      <Sep w="w-[6px]" />
                      <Ti><BlocksI /></Ti>
                      <Sep w="w-[8px]" />
                      <Ti><UpI /></Ti>
                      <Ti><DownI /></Ti>
                      <Sep />
                      <Ti><FilterI /></Ti>
                      <Dd w="w-[7px]" />
                      <Sep w="w-[9px]" />
                      <Ti><LayoutI /></Ti>
                      <Dd w="w-[14px]" />
                      <Sep w="w-[10px]" />
                      <Ti><PreviewI /></Ti>
                    </div>
                    <TopGrid />
                    <TopTotals />
                    <BottomPanel />
                  </div>
                </div>
              </div>
              <div className="w-[17px] ml-[5px] bg-[#f0f0f0] flex flex-col shrink-0">
                <div className="h-[15px] flex items-center justify-center">
                  <svg width="9" height="6" viewBox="0 0 9 6"><path d="M1 5L4.5 1.5L8 5" fill="none" stroke="#888" strokeWidth="1.6" /></svg>
                </div>
                <div className="h-[395px] bg-[#cdcdcd]" />
                <div className="mt-auto h-[16px] flex items-center justify-center">
                  <svg width="9" height="6" viewBox="0 0 9 6"><path d="M1 1L4.5 4.5L8 1" fill="none" stroke="#888" strokeWidth="1.6" /></svg>
                </div>
              </div>
            </div>
          </div>
        </div>
      </div>
      <div className="h-[24px] bg-[#0072c6] shrink-0 flex items-end justify-end pr-[3px] pb-[3px]">
        <svg width="10" height="10" viewBox="0 0 10 10"><path d="M8 0h2v2H8zM4 4h2v2H4zM8 4h2v2H8zM0 8h2v2H0zM4 8h2v2H4zM8 8h2v2H8z" fill="#a9cfea" /></svg>
      </div>
    </div>
  );
}

const Gear8 = () => (<Svg><Gear x={8} y={8} r={7.5} /></Svg>);
